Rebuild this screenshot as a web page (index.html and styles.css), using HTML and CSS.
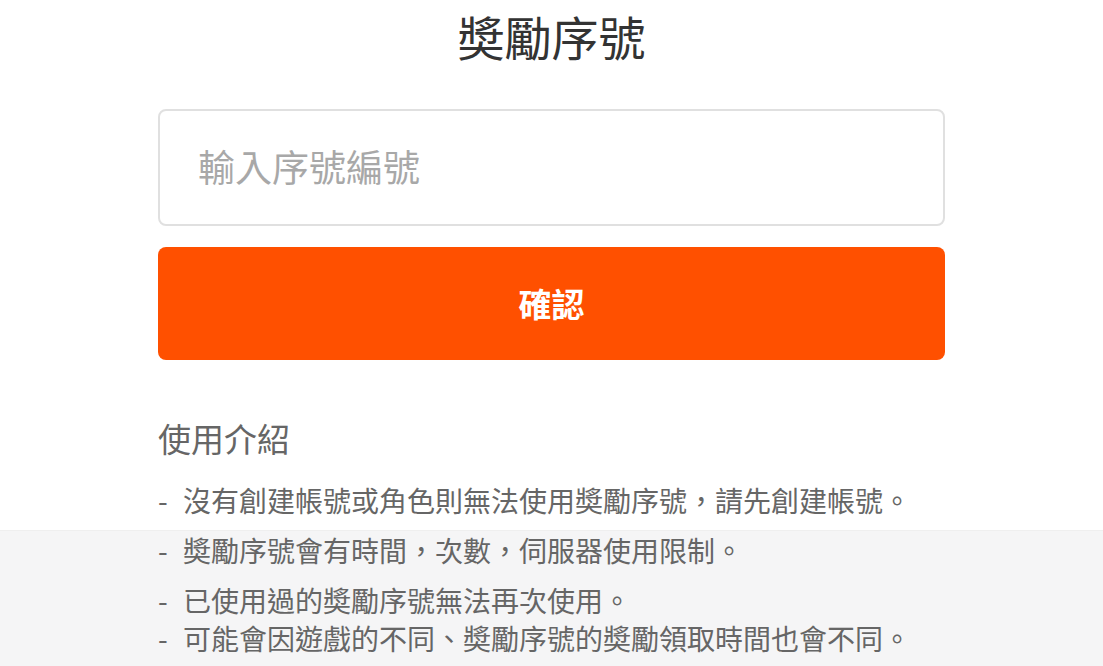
FILE: index.html
```html
<!DOCTYPE html>
<html lang="zh-Hant">
<head>
  <meta charset="UTF-8" />
  <meta name="viewport" content="width=device-width, initial-scale=1" />
  <title>獎勵序號</title>
  <link rel="stylesheet" href="styles.css">
</head>
<body>

<div class="panel">
  <h1>奬勵序號</h1>
  <input type="text" class="code-input" placeholder="輸入序號編號" />
  <button class="confirm">確認</button>

  <h2>使用介紹</h2>
  <ul class="tips">
    <li><span class="dash">-</span>沒有創建帳號或角色則無法使用奬勵序號，請先創建帳號。</li>
  </ul>
</div>

<div class="band">
  <ul class="tips panel-inner">
    <li class="spaced"><span class="dash">-</span>奬勵序號會有時間，次數，伺服器使用限制。</li>
    <li><span class="dash">-</span>已使用過的奬勵序號無法再次使用。</li>
    <li><span class="dash">-</span>可能會因遊戲的不同、奬勵序號的奬勵領取時間也會不同。</li>
  </ul>
</div>

</body>
</html>
```

FILE: styles.css
```css
* {
  margin: 0;
  padding: 0;
  box-sizing: border-box;
}

body {
  font-family: "Noto Sans CJK TC", "Noto Sans", sans-serif;
  background-color: #ffffff;
  color: #333333;
  height: 666px;
  overflow: hidden;
  display: flex;
  flex-direction: column;
}

.panel,
.panel-inner {
  width: 787px;
  margin: 0 auto;
}

.panel h1 {
  font-size: 47px;
  font-weight: 400;
  line-height: 54px;
  padding-top: 9px;
  text-align: center;
  color: #333333;
}

.code-input {
  display: block;
  width: 100%;
  height: 117px;
  margin-top: 46px;
  padding: 0 38px 4px;
  font-family: inherit;
  font-size: 37px;
  color: #333333;
  border: 2px solid #e0e0e0;
  border-radius: 8px;
  outline: none;
}

.code-input::placeholder {
  color: #a8a8a8;
}

.confirm {
  display: block;
  width: 100%;
  height: 113px;
  margin-top: 21px;
  padding-bottom: 2px;
  font-family: inherit;
  font-size: 33px;
  font-weight: 700;
  color: #ffffff;
  background: #ff5000;
  border: none;
  border-radius: 8px;
  cursor: pointer;
}

.panel h2 {
  margin-top: 58px;
  font-size: 33px;
  font-weight: 400;
  line-height: 40px;
  color: #666666;
}

.tips {
  list-style: none;
  font-size: 28px;
  line-height: 38px;
  color: #666666;
}

.panel .tips {
  margin-top: 23px;
}

.tips .dash {
  display: inline-block;
  width: 25px;
}

.tips .spaced {
  margin-bottom: 12px;
}

.band {
  flex: 1;
  margin-top: 11px;
  background-color: #f5f5f6;
  border-top: 1px solid #efefef;
}
```
